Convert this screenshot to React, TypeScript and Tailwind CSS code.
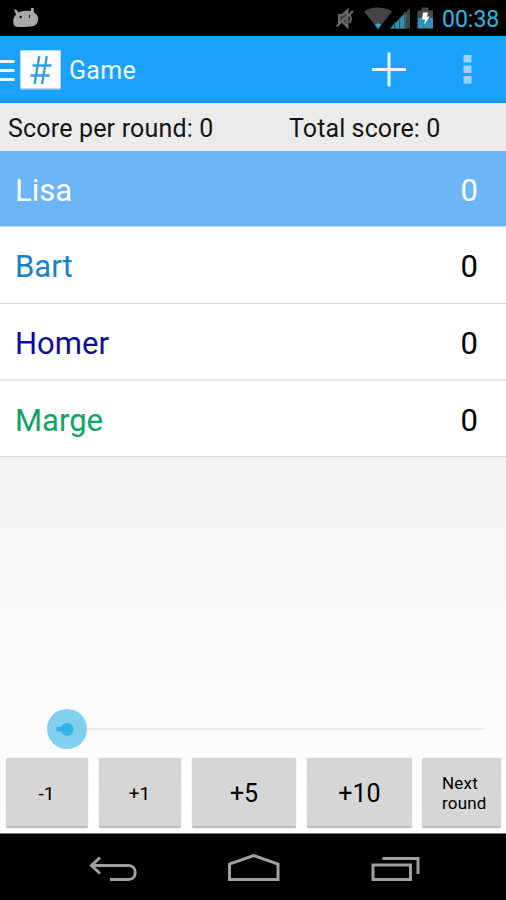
import React, { useState } from 'react';
import clsx from 'clsx';

interface Player {
  name: string;
  color: string;
  row: string;
  score: number;
}

const players: Player[] = [
  { name: 'Lisa', color: 'text-white', row: 'h-[76px] border-b border-[#d0dce6]', score: 0 },
  { name: 'Bart', color: 'text-[#1583c9]', row: 'h-[77px] border-b border-[#d4d4d4]', score: 0 },
  { name: 'Homer', color: 'text-[#0d0d9c]', row: 'h-[77px] border-b-2 border-[#e9e9e9]', score: 0 },
  { name: 'Marge', color: 'text-[#0fa168]', row: 'h-[76px] border-b border-[#d4d4d4]', score: 0 },
];

const StatusBar: React.FC = () => (
  <div className="flex h-9 shrink-0 items-center justify-between bg-black pr-[8px] pl-[12px]">
    <svg width="28" height="22" viewBox="12 7 28 22" fill="#a9a9a9">
      <path d="M14 9.800 16 9.200l2.500 3.200c3.500-1.500 8.500-1.900 12-1.200l.8-3.400 2.400.3.200 4.400c2.600 1.300 4.300 3.700 4.300 6.200 0 3.500-2.400 6.800-4.800 7.300-5 .9-12 1.300-17 .8-2.200-.4-3.200-2.800-3.200-5.300 0-2.700 1-5.200 2.900-7z" />
      <circle cx="20.600" cy="17" r="1.200" fill="#111" />
      <path d="M28.800 15h1.300v3h-1.300z" fill="#222" />
    </svg>
    <div className="flex items-center">
      <svg width="104" height="24" viewBox="335 6 104 24">
        <g fill="none" stroke="#6b6b6b" strokeWidth="2">
          <path d="M339 15h3.500l5-5v17l-5-5H339z" fill="#444" />
          <path d="M336.500 26.500 353 11M349.500 14.500c1.500 2.200 1.500 6 0 8.500" />
        </g>
        <path d="M364 11.500c7.500-5.300 20-5.300 28 0L378 29z" fill="#464646" />
        <path d="M374.800 24.500c2-1.200 4.600-1.200 6.600 0L378 29z" fill="#38a3c9" />
        <path d="M390 28.500 410 8v20.500z" fill="#444" />
        <path d="M390 28.500 405.500 12.600v15.900z" fill="#3590b4" />
        <path d="M394.700 22v7M399.700 17v12M404.700 12v17" stroke="#1d5064" strokeWidth="1" />
        <path d="M417.500 10.500h4V7.500h7v3h4.500v7h-15.500z" fill="#484848" />
        <path d="M417.500 17.500H433v11h-15.500z" fill="#3391b7" />
        <path d="M423 12.500h5l-1 4h2.500l-5.300 8.500.8-5.500h-3z" fill="#fff" />
      </svg>
      <span className="ml-[3px] w-[56px] pt-[2px] text-[23px] leading-none text-[#33b5e5]">00:38</span>
    </div>
  </div>
);

const ActionBar: React.FC = () => (
  <header className="flex h-[67px] shrink-0 items-center border-b-2 border-[#0b94f8] bg-[#1ba1ff] pt-[2px]">
    <button className="flex items-center" title="Menu">
      <svg width="20" height="30" viewBox="0 55 20 30" stroke="#e8f7ff" strokeWidth="3">
        <path d="M0 61.500h14.500M0 70.500h14.500M0 79.500h14.500" />
      </svg>
      <svg width="41" height="40" viewBox="20 50 41 40">
        <path d="M20.500 50.500h40v39h-40z" fill="#c4d4df" />
        <path d="M20.500 50.500h40v37.500h-40z" fill="#fff" />
        <path
          d="M39.300 56 34.500 84M46.800 56 42 84M32.500 65.500h19M30.500 75.500h19"
          fill="none"
          stroke="#2e9fdc"
          strokeWidth="2.300"
        />
      </svg>
    </button>
    <h1 className="ml-2 pt-px text-[25px] leading-none tracking-[0.3px] text-[#eef9ff]">Game</h1>
    <button className="ml-auto" title="Add player">
      <svg width="36" height="36" viewBox="0 0 36 36" stroke="#e6f5ff" strokeWidth="3">
        <path d="M18 .5v34M1 17.500h34" />
      </svg>
    </button>
    <button className="mr-[34px] ml-[56px]" title="More options">
      <svg width="9" height="30" viewBox="0 0 9 30" fill="#99d2fc">
        <path d="M.5 0h8v7.500h-8zM.5 10.500h8V18h-8zM.5 21h8v7.500h-8z" />
      </svg>
    </button>
  </header>
);

const ScoreButton: React.FC<{ className: string; children: React.ReactNode; onClick?: () => void }> = ({
  className,
  children,
  onClick,
}) => (
  <button
    onClick={onClick}
    className={clsx(
      'h-[70px] rounded-[2px] border-b-2 border-[#bdbdbd] bg-[#d6d6d6] text-black shadow-[0_0_1px_#bbb]',
      className
    )}
  >
    {children}
  </button>
);

const App: React.FC = () => {
  const [selected, setSelected] = useState(0);
  const [scores, setScores] = useState(players.map(p => p.score));

  const addScore = (delta: number) => {
    setScores(prev => prev.map((s, i) => (i === selected ? s + delta : s)));
  };

  const total = scores.reduce((sum, s) => sum + s, 0);

  return (
    <div className="flex h-[900px] w-[506px] flex-col overflow-hidden bg-white font-['Roboto',sans-serif]">
      <StatusBar />
      <ActionBar />

      <div className="flex h-[48px] shrink-0 items-center bg-[#ebebeb] pl-2 text-[25px] leading-none text-[#151515]">
        <span className="w-[281px] pt-[2px] tracking-[0.18px]">Score per round: 0</span>
        <span className="pt-[2px] tracking-[0.1px]">Total score: {total}</span>
      </div>

      <ul className="shrink-0">
        {players.map((player, i) => (
          <li
            key={player.name}
            onClick={() => setSelected(i)}
            className={clsx(
              'flex items-center justify-between pr-[28px] pl-[15px] text-[31px] leading-none',
              player.row,
              i === selected ? 'bg-[#6cb5f6]' : 'bg-white'
            )}
          >
            <span className={clsx('pt-[3px]', player.color)}>{player.name}</span>
            <span className={clsx('pt-[3px]', i === selected ? 'text-white' : 'text-black')}>{scores[i]}</span>
          </li>
        ))}
      </ul>

      <div className="flex flex-1 flex-col justify-end bg-linear-to-b from-[#f3f3f3] to-white">
        <div className="flex h-[40px] items-center pr-[22px] pl-[47px]">
          <svg width="40" height="40" viewBox="0 0 40 40" className="shrink-0">
            <circle cx="20" cy="20" r="20" fill="#7fd0ef" />
            <path d="M9.500 18h4.500a6.500 6.500 0 1 1 0 4.500H9.500z" fill="#31b2e4" />
          </svg>
          <div className="h-[2px] flex-1 bg-[#ebebeb]" />
        </div>
        <div className="flex pt-[9px] pr-[4px] pb-[5px] pl-[6px]">
          <ScoreButton className="w-[82px] pt-[4px] pr-[1px] text-[19px]" onClick={() => addScore(-1)}>-1</ScoreButton>
          <ScoreButton className="ml-[11px] w-[82px] pt-[4px] pr-[1px] text-[19px]" onClick={() => addScore(1)}>+1</ScoreButton>
          <ScoreButton className="ml-[11px] w-[104px] pt-[4px] text-[25px]" onClick={() => addScore(5)}>+5</ScoreButton>
          <ScoreButton className="ml-[11px] w-[105px] pt-[4px] text-[25px]" onClick={() => addScore(10)}>+10</ScoreButton>
          <ScoreButton className="ml-[10px] w-[79px] pt-[2px] pl-[20px] text-left text-[17px] leading-[20px] tracking-[0.2px]">
            Next
            <br />
            round
          </ScoreButton>
        </div>
      </div>

      <nav className="flex h-[67px] shrink-0 items-center border-t border-[#777] bg-black">
        <svg width="506" height="66" viewBox="0 834 506 66" fill="none" stroke="#a0a0a0" strokeWidth="3">
          <path d="M100 857.500 91.500 865.500l8.500 8M92 865.500h36.500c9 0 9 14 0 14H110" />
          <path d="M229.500 879.500v-15.500l24-8.500 24.500 8.500v15.500z" />
          <path d="M373 865h37.500v14.500H373zM382.500 858.500h35.500v15.500" />
        </svg>
      </nav>
    </div>
  );
};

export default App;
